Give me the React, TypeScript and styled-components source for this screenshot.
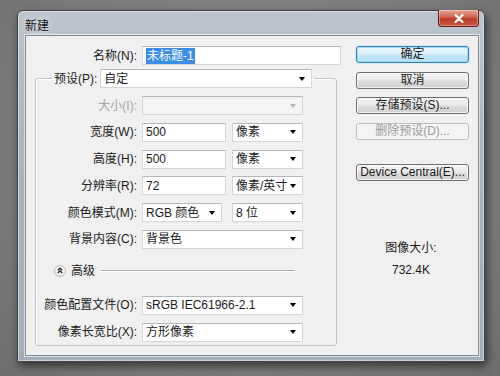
import { createGlobalStyle, styled } from "styled-components";

const GlobalStyle = createGlobalStyle`
  html, body {
    margin: 0;
    padding: 0;
    background: #7d7d7d;
  }
  * {
    box-sizing: border-box;
  }
`;

const Page = styled.div`
  width: 500px;
  height: 376px;
  padding: 10px 0 0 17px;
  background: radial-gradient(ellipse at 50% 40%, #8a8a8a 0%, #7a7a7a 70%, #6e6e6e 100%);
  font-family: "Liberation Sans", "Noto Sans CJK SC", sans-serif;
  font-size: 12px;
  color: #1b1b1b;
  overflow: hidden;
`;

const Window = styled.div`
  width: 468px;
  height: 352px;
  display: flex;
  flex-direction: column;
  border: 1px solid #3d4248;
  border-radius: 6px 6px 0 0;
  background: linear-gradient(180deg, #bcc5cd 0%, #a9b4be 40%, #a2aeb9 100%);
  box-shadow: 2px 4px 10px rgba(0, 0, 0, 0.55), inset 0 0 0 1px rgba(255, 255, 255, 0.45);
`;

const TitleBar = styled.div`
  height: 24px;
  display: flex;
  align-items: flex-start;
  justify-content: space-between;
  padding-left: 7px;
  padding-right: 5px;
`;

const Title = styled.span`
  margin-top: 5px;
  font-size: 12px;
  color: #111;
  text-shadow: 0 0 6px rgba(255, 255, 255, 0.9);
`;

const CloseButton = styled.div`
  width: 41px;
  height: 17px;
  margin-top: -1px;
  display: flex;
  align-items: center;
  justify-content: center;
  border: 1px solid #5e1f16;
  border-top: none;
  border-radius: 0 0 4px 4px;
  background: linear-gradient(180deg, #e7a797 0%, #d0614d 45%, #bd3a26 55%, #c9543f 100%);
  box-shadow: inset 0 0 0 1px rgba(255, 255, 255, 0.35);
`;

const Client = styled.div`
  flex: 1;
  margin: 0 5px 5px 7px;
  display: flex;
  background: #f0f0f0;
  border: 1px solid #7f8891;
  box-shadow: 0 0 0 1px rgba(255, 255, 255, 0.6);
`;

const LeftColumn = styled.div`
  width: 316px;
  padding: 10px 0 0 9px;
  display: flex;
  flex-direction: column;
`;

const RightColumn = styled.div`
  width: 113px;
  margin-left: 14px;
  padding-top: 10px;
  display: flex;
  flex-direction: column;
`;

const FormRow = styled.div<{ $labelWidth: number }>`
  display: grid;
  grid-template-columns: ${(p) => p.$labelWidth}px auto;
  column-gap: 5px;
  align-items: center;
  height: 19px;
`;

const Label = styled.span<{ $disabled?: boolean }>`
  text-align: right;
  white-space: nowrap;
  line-height: 16px;
  color: ${(p) => (p.$disabled ? "#a3a3a3" : "#1b1b1b")};
`;

const Controls = styled.div`
  width: 161px;
  display: flex;
  justify-content: space-between;
`;

const Field = styled.div<{ $w: number; $disabled?: boolean }>`
  width: ${(p) => p.$w}px;
  height: 19px;
  display: flex;
  align-items: center;
  padding: 0 6px 0 3px;
  border: 1px solid #d3d5d8;
  border-top-color: #b4b7bb;
  background: ${(p) => (p.$disabled ? "#f4f4f4" : "#ffffff")};
  line-height: 16px;
  white-space: nowrap;
`;

const Selected = styled.span`
  background: #3a8ee6;
  color: #ffffff;
  padding: 0 1px;
`;

const Arrow = styled.span<{ $disabled?: boolean }>`
  margin-left: auto;
  flex: none;
  width: 0;
  height: 0;
  border-left: 3.5px solid transparent;
  border-right: 3.5px solid transparent;
  border-top: 4px solid ${(p) => (p.$disabled ? "#b5b5b5" : "#000000")};
`;

const GroupBox = styled.fieldset`
  width: 302px;
  margin: 4px 0 0 0;
  padding: 8px 0 3px 0;
  border: 1px solid #bfc3c7;
  border-radius: 3px;
  box-shadow: inset 1px 1px 0 #ffffff;
  min-width: 0;
`;

const Legend = styled.legend`
  margin-left: 16px;
  padding: 0 2px;
`;

const LegendInner = styled.div`
  display: flex;
  align-items: center;
  gap: 3px;
  height: 19px;
`;

const Rows = styled.div`
  display: flex;
  flex-direction: column;
  gap: 7.8px;
`;

const AdvancedRow = styled.div`
  display: flex;
  align-items: center;
  gap: 5px;
  height: 12px;
  margin: 16px 0 19px 18px;
`;

const AdvancedIcon = styled.span`
  width: 12px;
  height: 12px;
  border-radius: 50%;
  border: 1px solid #b9bcc0;
  background: linear-gradient(180deg, #ffffff, #e4e4e4);
  display: flex;
  align-items: center;
  justify-content: center;
`;

const AdvancedText = styled.span`
  line-height: 16px;
`;

const Rule = styled.span`
  width: 194px;
  height: 2px;
  margin-left: 1px;
  border-top: 1px solid #a7a7a7;
  border-bottom: 1px solid #ffffff;
`;

const Button = styled.div<{ $variant?: "default" | "disabled" }>`
  height: 17px;
  display: flex;
  align-items: center;
  justify-content: center;
  border-radius: 3px;
  line-height: 15px;
  white-space: nowrap;
  border: 1px solid
    ${(p) =>
      p.$variant === "default" ? "#3c7fb1" : p.$variant === "disabled" ? "#b8bcbf" : "#707070"};
  color: ${(p) => (p.$variant === "disabled" ? "#9a9a9a" : "#1b1b1b")};
  background: ${(p) =>
    p.$variant === "default"
      ? "linear-gradient(180deg, #edf8fe 0%, #dcf1fc 48%, #c4e6f8 52%, #b6def4 100%)"
      : p.$variant === "disabled"
        ? "#f4f4f4"
        : "linear-gradient(180deg, #f4f4f4 0%, #ebebeb 48%, #dddddd 52%, #d0d0d0 100%)"};
  box-shadow: ${(p) =>
    p.$variant === "default"
      ? "0 0 2px #8fd0f2, inset 0 0 0 1px #9fdcf7"
      : "inset 0 0 0 1px rgba(255,255,255,0.75)"};
`;

const ButtonStack = styled.div`
  display: flex;
  flex-direction: column;
  gap: 8.5px;
`;

const CentralButton = styled(Button)`
  margin-top: 24px;
`;

const ImageSize = styled.div`
  margin-top: 59px;
  display: flex;
  flex-direction: column;
  align-items: center;
  gap: 6px;
  line-height: 16px;
  padding-right: 3px;
`;

type RowSpec = {
  label: string;
  disabled?: boolean;
  fields: { w: number; text: string; arrow?: boolean }[];
};

const rowsTop: RowSpec[] = [
  { label: "大小(I):", disabled: true, fields: [{ w: 161, text: "", arrow: true }] },
  { label: "宽度(W):", fields: [{ w: 84, text: "500" }, { w: 71, text: "像素", arrow: true }] },
  { label: "高度(H):", fields: [{ w: 84, text: "500" }, { w: 71, text: "像素", arrow: true }] },
  { label: "分辨率(R):", fields: [{ w: 84, text: "72" }, { w: 71, text: "像素/英寸", arrow: true }] },
  { label: "颜色模式(M):", fields: [{ w: 80, text: "RGB 颜色", arrow: true }, { w: 71, text: "8 位", arrow: true }] },
  { label: "背景内容(C):", fields: [{ w: 161, text: "背景色", arrow: true }] },
];

const rowsBottom: RowSpec[] = [
  { label: "颜色配置文件(O):", fields: [{ w: 161, text: "sRGB IEC61966-2.1", arrow: true }] },
  { label: "像素长宽比(X):", fields: [{ w: 161, text: "方形像素", arrow: true }] },
];

function Row({ spec }: { spec: RowSpec }) {
  return (
    <FormRow $labelWidth={101}>
      <Label $disabled={spec.disabled}>{spec.label}</Label>
      <Controls>
        {spec.fields.map((f, i) => (
          <Field key={i} $w={f.w} $disabled={spec.disabled}>
            {f.text}
            {f.arrow && <Arrow $disabled={spec.disabled} />}
          </Field>
        ))}
      </Controls>
    </FormRow>
  );
}

export default function App() {
  return (
    <Page>
      <GlobalStyle />
      <Window>
        <TitleBar>
          <Title>新建</Title>
          <CloseButton>
            <svg width="10" height="9" viewBox="0 0 10 9">
              <path d="M1.5 1 L8.5 8 M8.5 1 L1.5 8" stroke="#ffffff" strokeWidth="2.2" strokeLinecap="round" />
            </svg>
          </CloseButton>
        </TitleBar>
        <Client>
          <LeftColumn>
            <FormRow $labelWidth={102}>
              <Label>名称(N):</Label>
              <Field $w={199}>
                <Selected>未标题-1</Selected>
              </Field>
            </FormRow>
            <GroupBox>
              <Legend>
                <LegendInner>
                  <Label>预设(P):</Label>
                  <Field $w={212}>
                    自定
                    <Arrow />
                  </Field>
                </LegendInner>
              </Legend>
              <Rows>
                {rowsTop.map((r) => (
                  <Row key={r.label} spec={r} />
                ))}
              </Rows>
              <AdvancedRow>
                <AdvancedIcon>
                  <svg width="6" height="7" viewBox="0 0 6 7">
                    <path d="M0.8 3.3 L3 1.2 L5.2 3.3 M0.8 6 L3 3.9 L5.2 6" stroke="#222" strokeWidth="1.2" fill="none" />
                  </svg>
                </AdvancedIcon>
                <AdvancedText>高级</AdvancedText>
                <Rule />
              </AdvancedRow>
              <Rows>
                {rowsBottom.map((r) => (
                  <Row key={r.label} spec={r} />
                ))}
              </Rows>
            </GroupBox>
          </LeftColumn>
          <RightColumn>
            <ButtonStack>
              <Button $variant="default">确定</Button>
              <Button>取消</Button>
              <Button>存储预设(S)...</Button>
              <Button $variant="disabled">删除预设(D)...</Button>
            </ButtonStack>
            <CentralButton>Device Central(E)...</CentralButton>
            <ImageSize>
              <span>图像大小:</span>
              <span>732.4K</span>
            </ImageSize>
          </RightColumn>
        </Client>
      </Window>
    </Page>
  );
}
